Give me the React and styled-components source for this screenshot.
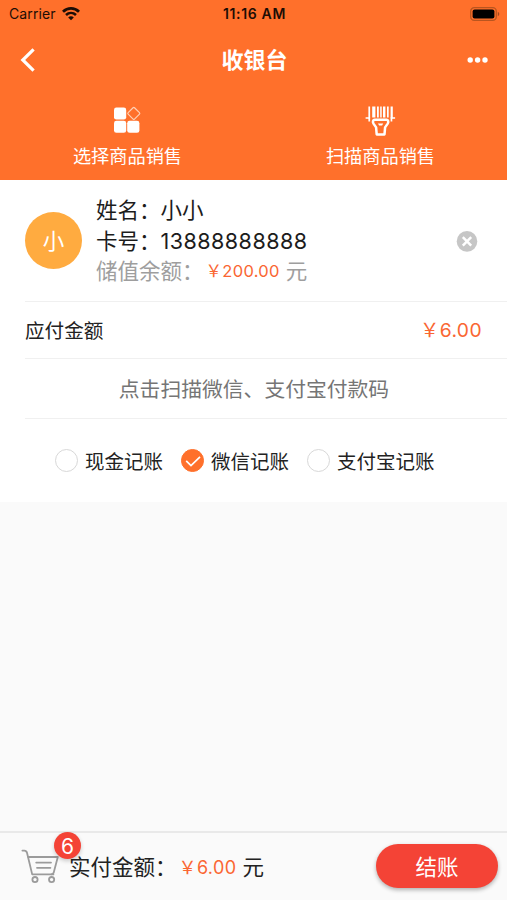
import { useState } from 'react';
import styled, { createGlobalStyle } from 'styled-components';

const App = () => {
    const [method, setMethod] = useState('wechat');

    return (
        <Page>
            <GlobalStyle />
            <Header>
                <StatusBar>
                    <Carrier>
                        Carrier
                        <WifiIcon />
                    </Carrier>
                    <Time>11:16 AM</Time>
                    <Battery><BatteryIcon /></Battery>
                </StatusBar>
                <NavBar>
                    <BackIcon />
                    <Title>收银台</Title>
                    <More><MoreIcon /></More>
                </NavBar>
                <Actions>
                    <Action>
                        <GoodsIcon />
                        选择商品销售
                    </Action>
                    <Action>
                        <ScannerIcon />
                        扫描商品销售
                    </Action>
                </Actions>
            </Header>
            <Card>
                <Member>
                    <Avatar>小</Avatar>
                    <Info>
                        <Line>姓名：小小</Line>
                        <Line>卡号：<Digits>13888888888</Digits></Line>
                        <Line $muted>储值余额：<Price $size="16.5px" $gap="0.3px" $indent="2px">￥200.00</Price><Unit>元</Unit></Line>
                    </Info>
                    <ClearIcon />
                </Member>
                <AmountRow>
                    <span>应付金额</span>
                    <Price $size="19.3px" $gap="0.4px">￥6.00</Price>
                </AmountRow>
                <ScanRow>点击扫描微信、支付宝付款码</ScanRow>
                <Methods>
                    {methods.map(({id, label}) => (
                        <Method key={id} onClick={() => setMethod(id)}>
                            <Radio $checked={method === id}>
                                {method === id && <CheckIcon />}
                            </Radio>
                            {label}
                        </Method>
                    ))}
                </Methods>
            </Card>
            <Footer>
                <Cart>
                    <CartIcon />
                    <Badge>6</Badge>
                </Cart>
                <Total>
                    实付金额：<Price $size="18px" $gap="0.4px" $indent="2px">￥6.00</Price><Unit>元</Unit>
                </Total>
                <PayButton>结账</PayButton>
            </Footer>
        </Page>
    )
}

export default App

const methods = [
    { id: 'cash', label: '现金记账' },
    { id: 'wechat', label: '微信记账' },
    { id: 'alipay', label: '支付宝记账' },
];

const WifiIcon = () => (
    <svg width="18" height="14" viewBox="0 0 18 14" fill="none" stroke="#1d0d05">
        <path d="M1 4.7C5.6.3 12.4.3 17 4.7" strokeWidth="2.8" />
        <path d="M4 8C6.9 5.3 11.1 5.3 14 8" strokeWidth="2.6" />
        <path d="M9 13.2 6.2 10.4C7.8 9 10.2 9 11.8 10.4Z" fill="#1d0d05" stroke="none" />
    </svg>
)

const BatteryIcon = () => (
    <svg width="32" height="14" viewBox="0 0 32 14">
        <rect x="2.7" y=".7" width="25.6" height="12.6" rx="3.6" fill="none" stroke="#b9551f" strokeWidth="1.3" />
        <rect x="4.6" y="2.6" width="21.8" height="8.8" rx="2" fill="#000" />
        <path d="M29.8 4.8C31.8 5.6 31.8 8.4 29.8 9.2Z" fill="#a34a20" />
    </svg>
)

const BackIcon = () => (
    <svg width="16" height="24" viewBox="0 0 16 24" fill="none" stroke="#fff" strokeWidth="3.2">
        <path d="M13.6 1.4 2.8 12 13.6 22.6" />
    </svg>
)

const MoreIcon = () => (
    <svg width="22" height="6" viewBox="0 0 22 6" fill="#fff">
        <circle cx="3.2" cy="3" r="2.7" />
        <circle cx="10.6" cy="3" r="2.7" />
        <circle cx="18" cy="3" r="2.7" />
    </svg>
)

const GoodsIcon = () => (
    <svg width="28" height="28" viewBox="0 0 28 28" fill="#fff">
        <rect x="0" y="2.6" width="12.2" height="12" rx="2.4" />
        <rect x="0" y="15.8" width="12.2" height="12" rx="2.4" />
        <rect x="13.2" y="15.8" width="12.2" height="12" rx="2.4" />
        <rect x="15.3" y="3.9" width="9" height="9" rx="1" transform="rotate(45 19.8 8.4)" fill="none" stroke="#ffd0b5" strokeWidth="1.2" />
    </svg>
)

const ScannerIcon = () => (
    <svg width="32" height="32" viewBox="0 0 32 32" fill="#fff">
        <path d="M3.4 1.4h1.7v12H3.4zM7.2 1.4h3.2v11.2H7.2zM12 1.4h1.8v11h-1.8zM15.2 1.4h1.5v11h-1.5zM18 1.4h2.4v11h-2.4zM22 1.4h1.7v11.2h-1.7zM25.6 1.4h2.2v12h-2.2z" />
        <path d="M.6 12.2h4.5v1.6H.6zM25.6 12.2h4.5v1.6h-4.5zM3.4 13h1.7v3.4H3.4zM25.6 13h1.7v3.4h-1.7z" />
        <path d="M9.7 14.8H21.5C23.3 14.8 23.8 16.8 22.7 18.6L20.1 22.4 19.5 29.4H11.7L11.1 22.4 8.5 18.6C7.4 16.8 7.9 14.8 9.7 14.8Z" fill="#ff702b" stroke="#fff" strokeWidth="2.5" strokeLinejoin="round" />
        <path d="M13 18.4h5.2l-1.1 2.2h-3z" />
    </svg>
)

const ClearIcon = () => (
    <svg width="22" height="22" viewBox="0 0 22 22">
        <circle cx="11" cy="11.4" r="10.3" fill="#c6c6c6" />
        <path d="M6.8 7.2 15.2 15.6M15.2 7.2 6.8 15.6" stroke="#fff" strokeWidth="2.5" />
    </svg>
)

const CheckIcon = () => (
    <svg width="22" height="22" viewBox="0 0 22 22" fill="none" stroke="#fff" strokeWidth="1.7">
        <path d="M4.2 10.8 9 15.6 18 6.8" />
    </svg>
)

const CartIcon = () => (
    <svg width="38" height="36" viewBox="0 0 38 36" fill="none" stroke="#9b9b9b" strokeWidth="1.8" strokeLinecap="round" strokeLinejoin="round">
        <path d="M1.4 1.6H3.4C5 1.6 5.6 2.4 6 3.8L11.2 25.4H32.4" />
        <path d="M7.3 8H36.8L33 22.6C32.7 24 32 25.2 30.4 25.4" />
        <path d="M15.2 13.6H30M16 18.8H29.4" />
        <circle cx="14" cy="30.6" r="2.6" />
        <circle cx="30.6" cy="30.6" r="2.6" />
    </svg>
)

const GlobalStyle = createGlobalStyle`
    * {
        box-sizing: border-box;
    }

    body {
        margin: 0;
        background: #fafafa;
        font-family: Inter, "Noto Sans CJK SC", sans-serif;
    }

    svg {
        display: block;
        flex-shrink: 0;
    }
`;

const Page = styled.div`
    width: 100%;
    height: 900px;
    display: flex;
    flex-direction: column;
    overflow: hidden;
    color: #222;
    white-space: nowrap;
`;

const Header = styled.header`
    height: 180px;
    background: #ff702b;
    color: #fff;
`;

const StatusBar = styled.div`
    height: 27px;
    padding: 0 7px 0 9px;
    display: grid;
    grid-template-columns: 1fr auto 1fr;
    align-items: center;
    color: #1d0d05;
    font-size: 14px;
`;

const Carrier = styled.div`
    display: flex;
    align-items: center;
    gap: 6px;
    letter-spacing: 0.1px;
`;

const Time = styled.div`
    font-weight: 600;
    letter-spacing: 0.65px;
`;

const Battery = styled.div`
    display: flex;
    justify-content: flex-end;
`;

const NavBar = styled.nav`
    height: 66px;
    padding: 0 18px 0 20px;
    display: grid;
    grid-template-columns: 1fr auto 1fr;
    align-items: center;
`;

const Title = styled.h1`
    margin: 0;
    font-size: 22px;
    font-weight: 700;
    line-height: 30px;
`;

const More = styled.div`
    display: flex;
    justify-content: flex-end;
`;

const Actions = styled.div`
    display: grid;
    grid-template-columns: 1fr 1fr;
    padding: 12px 0 0 1px;
`;

const Action = styled.div`
    display: flex;
    flex-direction: column;
    align-items: center;
    height: 64px;
    justify-content: space-between;
    font-size: 18.2px;
    line-height: 26px;
`;

const Card = styled.main`
    height: 322px;
    padding-left: 25px;
    background: #fff;
`;

const Member = styled.section`
    height: 122px;
    padding-right: 29px;
    display: flex;
    align-items: center;
    border-bottom: 1px solid #f0f0f0;
`;

const Avatar = styled.div`
    width: 57px;
    height: 57px;
    border-radius: 50%;
    background: #ffab40;
    color: #fff;
    display: flex;
    align-items: center;
    justify-content: center;
    font-size: 21.5px;
    padding-bottom: 2px;
`;

const Info = styled.div`
    flex: 1;
    margin-left: 14px;
`;

const Line = styled.div`
    display: flex;
    align-items: center;
    height: 30.5px;
    font-size: 21.5px;
    line-height: 30px;
    color: ${props => props.$muted ? "#9e9e9e" : "#1c1c1c"};
`;

const Digits = styled.span`
    letter-spacing: 0.48px;
`;

const Price = styled.span`
    margin-left: ${props => props.$indent || 0};
    color: #fa6632;
    font-size: ${props => props.$size};
    letter-spacing: ${props => props.$gap};
`;

const Unit = styled.span`
    margin-left: 6px;
`;

const AmountRow = styled.section`
    height: 57px;
    padding: 0 25px 2px 0;
    display: flex;
    align-items: center;
    justify-content: space-between;
    border-bottom: 1px solid #f0f0f0;
    font-size: 19.6px;
`;

const ScanRow = styled.section`
    height: 60px;
    padding: 0 24px 2px 0;
    display: flex;
    align-items: center;
    justify-content: center;
    border-bottom: 1px solid #f0f0f0;
    color: #757575;
    font-size: 20.8px;
`;

const Methods = styled.section`
    height: 83px;
    padding-left: 30px;
    display: flex;
    align-items: center;
    gap: 18px;
`;

const Method = styled.div`
    display: flex;
    align-items: center;
    gap: 7px;
    font-size: 19.5px;
    cursor: pointer;
`;

const Radio = styled.span`
    width: 23px;
    height: 23px;
    border-radius: 50%;
    border: 1px solid ${props => props.$checked ? "#ff702b" : "#d8d8d8"};
    background: ${props => props.$checked ? "#ff702b" : "#fff"};
    display: flex;
    align-items: center;
    justify-content: center;
`;

const Footer = styled.footer`
    height: 69px;
    margin-top: auto;
    padding: 0 9px 0 21px;
    display: flex;
    align-items: center;
    border-top: 2px solid #e9e9e9;
`;

const Cart = styled.div`
    position: relative;
    width: 48px;
`;

const Badge = styled.span`
    position: absolute;
    top: -17px;
    left: 33px;
    width: 27px;
    height: 27px;
    border-radius: 50%;
    background: #f44336;
    color: #fff;
    font-size: 21px;
    line-height: 29px;
    text-align: center;
    box-shadow: 0 2px 4px rgba(0, 0, 0, .2);
`;

const Total = styled.div`
    flex: 1;
    display: flex;
    align-items: center;
    padding-bottom: 2px;
    font-size: 21.5px;
`;

const PayButton = styled.button`
    width: 122px;
    height: 44px;
    padding: 0;
    border: none;
    border-radius: 22px;
    background: #f44336;
    color: #fff;
    font-family: inherit;
    font-size: 21.5px;
    box-shadow: 0 2px 4px rgba(0, 0, 0, .3);
    cursor: pointer;
    margin-bottom: 2px;
`;
